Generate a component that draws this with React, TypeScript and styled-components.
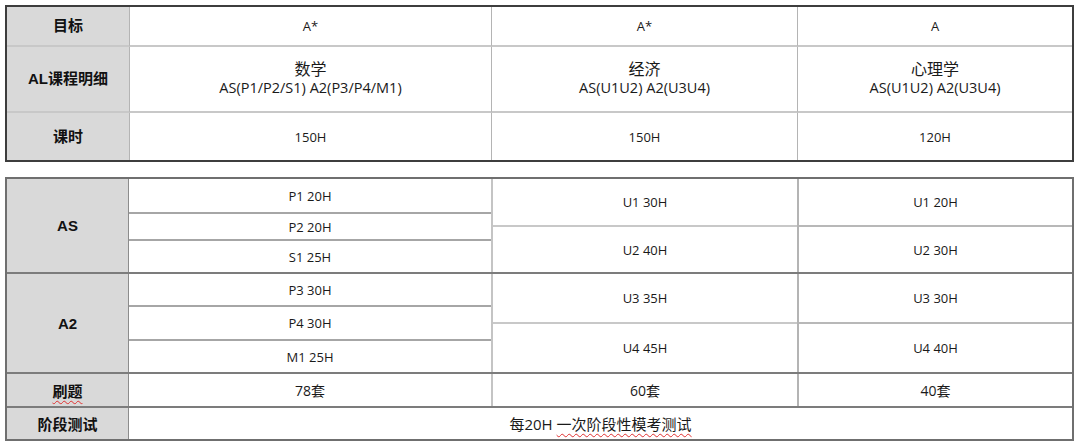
import React from 'react';
import styled, { createGlobalStyle } from 'styled-components';

const GlobalStyle = createGlobalStyle`
  * { box-sizing: border-box; }
  body {
    margin: 0;
    background: #ffffff;
    font-family: "Open Sans", "Noto Sans CJK SC", sans-serif;
    color: #1a1a1a;
  }
`;

const Page = styled.div`
  display: flex;
  flex-direction: column;
  gap: 15px;
  padding: 5px 6px 0 5px;
  width: 1080px;
`;

const COLS = '122px 362px 306px 1fr';

const TopTable = styled.div`
  display: grid;
  grid-template-columns: ${COLS};
  grid-template-rows: 40px 66px 1fr;
  height: 157px;
  border: 2px solid #3d3d3d;
`;

const Cell = styled.div<{ $label?: boolean; $last?: boolean; $first?: boolean }>`
  display: flex;
  flex-direction: column;
  align-items: center;
  justify-content: center;
  background: ${p => (p.$label ? '#d9d9d9' : '#ffffff')};
  border-bottom: ${p => (p.$last ? 'none' : '2px solid #c8c8c8')};
  border-left: ${p => (p.$first ? 'none' : p.$label ? 'none' : '1.5px solid #b4b4b4')};
  font-size: 13px;
  line-height: 18px;
`;

const Label = styled.span`
  font-family: "Liberation Sans", "Noto Sans CJK SC", sans-serif;
  font-weight: 700;
  font-size: 15px;
  color: #111;
`;

const Subject = styled.span`
  font-family: "Noto Sans CJK SC", sans-serif;
  font-size: 16px;
  line-height: 20px;
  margin-top: -4px;
`;

const Detail = styled.span`
  font-size: 14.5px;
  line-height: 19px;
`;

const Squiggle = styled.span`
  text-decoration: underline wavy #e03030;
  text-decoration-thickness: 1px;
  text-underline-offset: 3px;
`;

const BottomTable = styled.div`
  display: flex;
  flex-direction: column;
  border: 2px solid #6f6f6f;
`;

const Section = styled.div<{ $h: number; $last?: boolean }>`
  display: grid;
  grid-template-columns: ${COLS};
  height: ${p => p.$h}px;
  border-bottom: ${p => (p.$last ? 'none' : '2px solid #7c7c7c')};
`;

const SideLabel = styled.div`
  display: flex;
  align-items: center;
  justify-content: center;
  background: #d9d9d9;
  border-right: 1px solid #8c8c8c;
`;

const Stack = styled.div<{ $edge?: string }>`
  display: flex;
  flex-direction: column;
  border-left: ${p => (p.$edge ? `2px solid ${p.$edge}` : 'none')};
`;

const SubCell = styled.div<{ $h?: number; $line?: string }>`
  display: flex;
  align-items: center;
  justify-content: center;
  ${p => (p.$h ? `height: ${p.$h}px;` : 'flex: 1;')}
  border-bottom: ${p => (p.$line ? `2px solid ${p.$line}` : 'none')};
  font-size: 13px;
`;

const Count = styled.span`
  font-size: 14px;
`;

const WideCell = styled.div`
  grid-column: 2 / 5;
  display: flex;
  align-items: center;
  justify-content: center;
  font-size: 15px;
`;

type Unit = { text: string; h?: number };

const sections: { label: string; h: number; math: Unit[]; econ: Unit[]; psy: Unit[] }[] = [
  {
    label: 'AS',
    h: 95,
    math: [{ text: 'P1 20H', h: 35 }, { text: 'P2 20H', h: 27 }, { text: 'S1 25H' }],
    econ: [{ text: 'U1 30H', h: 48 }, { text: 'U2 40H' }],
    psy: [{ text: 'U1 20H', h: 48 }, { text: 'U2 30H' }],
  },
  {
    label: 'A2',
    h: 100,
    math: [{ text: 'P3 30H', h: 33 }, { text: 'P4 30H', h: 34 }, { text: 'M1 25H' }],
    econ: [{ text: 'U3 35H', h: 50 }, { text: 'U4 45H' }],
    psy: [{ text: 'U3 30H', h: 50 }, { text: 'U4 40H' }],
  },
];

const renderStack = (units: Unit[], line: string, edge?: string) => (
  <Stack $edge={edge}>
    {units.map((u, i) => (
      <SubCell key={u.text} $h={u.h} $line={i < units.length - 1 ? line : undefined}>
        {u.text}
      </SubCell>
    ))}
  </Stack>
);

const App = (): JSX.Element => {
  return (
    <>
      <GlobalStyle />
      <Page>
        <TopTable>
          <Cell $label $first><Label>目标</Label></Cell>
          <Cell>A*</Cell>
          <Cell>A*</Cell>
          <Cell>A</Cell>

          <Cell $label $first><Label>AL课程明细</Label></Cell>
          <Cell><Subject>数学</Subject><Detail>AS(P1/P2/S1) A2(P3/P4/M1)</Detail></Cell>
          <Cell><Subject>经济</Subject><Detail>AS(U1U2) A2(U3U4)</Detail></Cell>
          <Cell><Subject>心理学</Subject><Detail>AS(U1U2) A2(U3U4)</Detail></Cell>

          <Cell $label $first $last><Label>课时</Label></Cell>
          <Cell $last>150H</Cell>
          <Cell $last>150H</Cell>
          <Cell $last>120H</Cell>
        </TopTable>

        <BottomTable>
          {sections.map(s => (
            <Section key={s.label} $h={s.h}>
              <SideLabel><Label>{s.label}</Label></SideLabel>
              {renderStack(s.math, '#a6a6a6')}
              {renderStack(s.econ, '#c8c8c8', '#c4c4c4')}
              {renderStack(s.psy, '#b8b8b8', '#b4b4b4')}
            </Section>
          ))}
          <Section $h={34}>
            <SideLabel><Label><Squiggle>刷题</Squiggle></Label></SideLabel>
            <SubCell><Count>78套</Count></SubCell>
            <Stack $edge="#c4c4c4"><SubCell><Count>60套</Count></SubCell></Stack>
            <Stack $edge="#b4b4b4"><SubCell><Count>40套</Count></SubCell></Stack>
          </Section>
          <Section $h={31} $last>
            <SideLabel><Label>阶段测试</Label></SideLabel>
            <WideCell>每20H <Squiggle style={{ marginLeft: 4 }}>一次阶段性模考测试</Squiggle></WideCell>
          </Section>
        </BottomTable>
      </Page>
    </>
  );
};

export default App;
